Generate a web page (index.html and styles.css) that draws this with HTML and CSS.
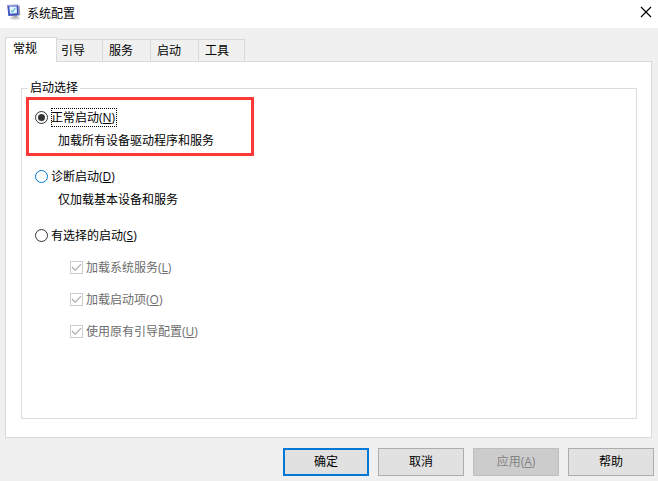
FILE: index.html
```html
<!DOCTYPE html>
<html lang="zh-CN">
<head>
<meta charset="utf-8">
<title>系统配置</title>
<link rel="stylesheet" href="styles.css">
</head>
<body>
<header class="titlebar">
  <svg class="app-icon" width="16" height="16" viewBox="0 0 16 16" aria-hidden="true">
    <ellipse cx="9" cy="14" rx="5" ry="1.800" fill="#d4d4d4"/>
    <path d="M6 11l5-1 1 3.500-4 1z" fill="#b5b3ae"/>
    <path d="M11.500 1l2.200.8.6 9-2.300 1z" fill="#9a9fbc"/>
    <path d="M1.200 1L12 .8l.6 10.400L2.400 12z" fill="#3a50c0"/>
    <path d="M1.200 1L12 .8v1L1.300 2z" fill="#9aa6de"/>
    <path d="M3.200 2.600L10.600 2.400l.4 6.800-7 .6z" fill="#e2f3fb"/>
    <path d="M5 6.400l1.500 1.600L9.200 4" fill="none" stroke="#5fb0dc" stroke-width="1.100"/>
  </svg>
  <h1 class="title">系统配置</h1>
  <button class="close" type="button" aria-label="关闭">
    <svg width="12" height="12" viewBox="0 0 12 12"><path d="M1 1l10 10M11 1L1 11" stroke="#000" stroke-width="1.200" fill="none"/></svg>
  </button>
</header>
<main class="content">
  <div class="tabs" role="tablist">
    <button class="tab tab-active" type="button" role="tab" aria-selected="true">常规</button>
    <button class="tab" type="button" role="tab" aria-selected="false">引导</button>
    <button class="tab" type="button" role="tab" aria-selected="false">服务</button>
    <button class="tab" type="button" role="tab" aria-selected="false">启动</button>
    <button class="tab" type="button" role="tab" aria-selected="false">工具</button>
  </div>
  <section class="panel" role="tabpanel">
    <fieldset class="group">
      <legend>启动选择</legend>
      <div class="option option-marked">
        <div class="choice">
          <input class="radio" type="radio" name="startup" id="normal" checked>
          <label class="focused" for="normal">正常启动(<u>N</u>)</label>
        </div>
        <p class="note">加载所有设备驱动程序和服务</p>
      </div>
      <div class="option">
        <div class="choice">
          <input class="radio radio-hot" type="radio" name="startup" id="diagnostic">
          <label for="diagnostic">诊断启动(<u>D</u>)</label>
        </div>
        <p class="note">仅加载基本设备和服务</p>
      </div>
      <div class="option">
        <div class="choice">
          <input class="radio" type="radio" name="startup" id="selective">
          <label for="selective">有选择的启动(<u>S</u>)</label>
        </div>
        <div class="checks">
          <div class="choice choice-disabled">
            <input class="check" type="checkbox" id="services" checked disabled>
            <label for="services">加载系统服务(<u>L</u>)</label>
          </div>
          <div class="choice choice-disabled">
            <input class="check" type="checkbox" id="items" checked disabled>
            <label for="items">加载启动项(<u>O</u>)</label>
          </div>
          <div class="choice choice-disabled">
            <input class="check" type="checkbox" id="original" checked disabled>
            <label for="original">使用原有引导配置(<u>U</u>)</label>
          </div>
        </div>
      </div>
    </fieldset>
  </section>
</main>
<footer class="actions">
  <button class="button button-default" type="button">确定</button>
  <button class="button" type="button">取消</button>
  <button class="button" type="button" disabled>应用(<u>A</u>)</button>
  <button class="button" type="button">帮助</button>
</footer>
</body>
</html>
```
FILE: styles.css
```css
* {
  box-sizing: border-box;
}

body {
  margin: 0;
  min-height: 100vh;
  display: flex;
  flex-direction: column;
  background: #f0f0f0;
  color: #000;
  font: 12px/16px "Open Sans", "Noto Sans CJK SC", sans-serif;
}

button {
  font: inherit;
  color: inherit;
}

.titlebar {
  display: flex;
  align-items: center;
  height: 28px;
  padding: 0 6px;
  background: #fff;
}

.app-icon {
  margin-bottom: 4px;
}

.title {
  flex: 1;
  margin: 0 0 0 5px;
  font-size: 12px;
  font-weight: 400;
}

.close {
  display: flex;
  margin-bottom: 4px;
  padding: 0;
  border: 0;
  background: none;
}

.content {
  flex: 1;
  display: flex;
  flex-direction: column;
  padding: 9px 6px 0 5px;
}

.tabs {
  display: flex;
  align-items: flex-end;
  height: 24px;
}

.tab {
  width: 48px;
  height: 22px;
  padding: 0 6px;
  border: 1px solid #d9d9d9;
  border-width: 1px 1px 0 0;
  background: #f0f0f0;
  text-align: left;
}

.tab:last-child {
  width: 46px;
}

.tab-active {
  z-index: 1;
  width: 52px;
  height: 25px;
  margin: 0 -2px -1px 0;
  padding: 0 7px 2px;
  border-left-width: 1px;
  background: #fff;
}

.panel {
  flex: 1;
  display: flex;
  padding: 18px 14px 18px 15px;
  border: 1px solid #d9d9d9;
  background: #fff;
}

.group {
  flex: 1;
  min-width: 0;
  margin: 0;
  padding: 1px 4px;
  border: 1px solid #dcdcdc;
}

.group legend {
  margin-left: 2px;
  padding: 0 2px;
}

.option {
  width: 228px;
  padding: 8px 6px 3px;
  border: 3px solid transparent;
}

.option-marked {
  border-color: #ff3838;
}

.choice {
  display: flex;
  align-items: center;
  gap: 3px;
  height: 19px;
}

.choice label {
  padding: 1px 2px 1px 0;
  line-height: 17px;
}

.choice .focused {
  outline: 1px dotted #000;
  outline-offset: -1px;
}

.choice-disabled {
  color: #6d6d6d;
}

.note {
  margin: 4px 0 0 23px;
  line-height: 19px;
}

.checks {
  display: flex;
  flex-direction: column;
  gap: 13px;
  margin: 13px 0 0 35px;
}

.radio,
.check {
  appearance: none;
  flex: none;
  display: grid;
  place-items: center;
  width: 13px;
  height: 13px;
  margin: 0;
  border: 1px solid #333;
  background: #fff;
}

.radio {
  border-radius: 50%;
}

.radio-hot {
  border-color: #0078d7;
}

.radio:checked::before {
  content: "";
  width: 7px;
  height: 7px;
  border-radius: 50%;
  background: #333;
}

.check {
  border-color: #ccc;
}

.check::before {
  content: "";
  width: 11px;
  height: 11px;
  background: #b8b8b8;
  clip-path: polygon(4% 50%, 14% 42%, 38% 66%, 86% 16%, 96% 26%, 38% 84%);
}

.actions {
  display: flex;
  justify-content: flex-end;
  gap: 9px;
  padding: 10px 4px 5px;
}

.button {
  width: 86px;
  height: 28px;
  padding: 0;
  border: 1px solid #adadad;
  background: #e1e1e1;
}

.button-default {
  border: 2px solid #0078d7;
}

.button:disabled {
  border-color: #bfbfbf;
  background: #ccc;
  color: #838383;
}
```
